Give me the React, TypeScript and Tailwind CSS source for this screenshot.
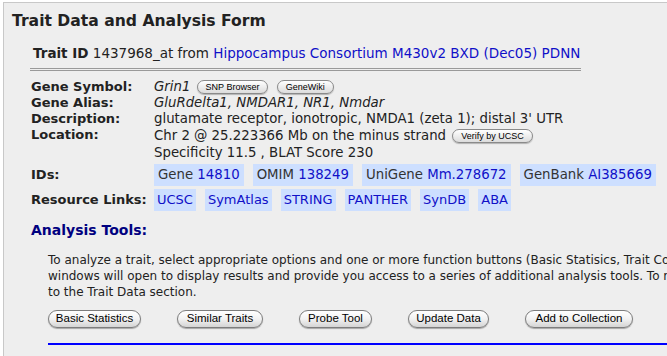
import type { ReactNode } from "react";

const font = { fontFamily: '"DejaVu Sans", Verdana, sans-serif' };

// Row in the gene info table
function InfoRow({ label, children, className = "" }: { label: string; children: ReactNode; className?: string }) {
  return (
    <div className={`flex ${className}`}>
      <div className="w-[123px] shrink-0 font-bold text-[13px] text-[#222]">{label}</div>
      <div className="text-[13.3px] text-[#222]">{children}</div>
    </div>
  );
}

function MiniButton({ children }: { children: ReactNode }) {
  return (
    <span
      className="inline-flex items-center h-[14px] px-[8px] mx-[2px] align-middle rounded-full border border-[#8a8a8a] bg-gradient-to-b from-white to-[#dcdcdc] text-[9px] text-black shadow-[0_1px_1px_rgba(0,0,0,0.25)]"
      style={{ fontFamily: '"Liberation Sans", Arial, sans-serif' }}
    >
      {children}
    </span>
  );
}

function ActionButton({ children, className }: { children: ReactNode; className: string }) {
  return (
    <button
      className={`h-[18px] rounded-full border border-[#7d7d7d] bg-gradient-to-b from-white via-[#f2f2f2] to-[#d4d4d4] text-[11.5px] leading-none text-black shadow-[0_1px_1px_rgba(0,0,0,0.3)] ${className}`}
      style={{ fontFamily: '"Liberation Sans", Arial, sans-serif' }}
    >
      {children}
    </button>
  );
}

function Chip({ label, value, className = "px-[4px] text-[13.3px]" }: { label?: string; value: string; className?: string }) {
  return (
    <span className={`bg-[#cddfff] py-[3px] ${className}`}>
      {label && <span className="text-[#333]">{label} </span>}
      <span className="text-[#1010c8]">{value}</span>
    </span>
  );
}

const resourceLinks = ["UCSC", "SymAtlas", "STRING", "PANTHER", "SynDB", "ABA"];

export default function App() {
  return (
    <div className="w-[667px] h-[356px] overflow-hidden bg-white" style={font}>
      <div className="ml-[3px] mt-[2px] h-[400px] w-[800px] border-l border-t border-[#c8c8c8] bg-[#eeeeee] pl-[8px]">
        {/* Title */}
        <h1 className="pt-[8px] text-[15.6px] font-bold text-[#222] leading-[20px]">Trait Data and Analysis Form</h1>

        {/* Trait ID header */}
        <div className="mt-[14px] ml-[18px] inline-block border-b-[3px] border-double border-[#999] pl-[3px] pr-[1px] pb-[6px] text-[13.5px] leading-[17px]">
          <span className="font-bold text-[#222]">Trait ID</span>{" "}
          <span className="text-[#222]">1437968_at from </span>
          <span className="text-[#1010c8]">Hippocampus Consortium M430v2 BXD (Dec05) PDNN</span>
        </div>

        {/* Gene info */}
        <div className="mt-[8px] ml-[19px] leading-[16px]">
          <InfoRow label="Gene Symbol:">
            <i>Grin1</i> <MiniButton>SNP Browser</MiniButton> <MiniButton>GeneWiki</MiniButton>
          </InfoRow>
          <InfoRow label="Gene Alias:">
            <i>GluRdelta1, NMDAR1, NR1, Nmdar</i>
          </InfoRow>
          <InfoRow label="Description:">glutamate receptor, ionotropic, NMDA1 (zeta 1); distal 3' UTR</InfoRow>
          <InfoRow label="Location:">
            <div className="h-[18px] flex items-center">
              Chr 2 @ 25.223366 Mb on the minus strand&nbsp;<MiniButton>Verify by UCSC</MiniButton>
            </div>
            <div>Specificity 11.5 , BLAT Score 230</div>
          </InfoRow>

          <div className="flex items-center mt-[3px]">
            <div className="w-[123px] shrink-0 font-bold text-[13px] text-[#222]">IDs:</div>
            <div className="flex gap-[9px] leading-[16px]">
              <Chip label="Gene" value="14810" />
              <Chip label="OMIM" value="138249" />
              <Chip label="UniGene" value="Mm.278672" />
              <Chip label="GenBank" value="AI385669" />
            </div>
          </div>
          <div className="flex items-center mt-[3px]">
            <div className="w-[123px] shrink-0 font-bold text-[13px] text-[#222]">Resource Links:</div>
            <div className="flex gap-[9px] leading-[16px]">
              {resourceLinks.map((link) => (
                <Chip key={link} value={link} className="px-[3px] text-[13px]" />
              ))}
            </div>
          </div>
        </div>

        {/* Analysis tools */}
        <div className="ml-[19px] mt-[9px]">
          <h2 className="text-[14px] font-bold text-[#000080] leading-[20px]">Analysis Tools:</h2>
          <p className="mt-[12px] ml-[17px] whitespace-nowrap text-[12px] leading-[16px] text-[#222]">
            To analyze a trait, select appropriate options and one or more function buttons (Basic Statisics, Trait Correlations, Interval Mapping). New
            <br />
            windows will open to display results and provide you access to a series of additional analysis tools. To revise the data, scroll down
            <br />
            to the Trait Data section.
          </p>
          <div className="ml-[17px] mt-[10px] flex gap-[36px]">
            <ActionButton className="w-[93px]">Basic Statistics</ActionButton>
            <ActionButton className="w-[86px]">Similar Traits</ActionButton>
            <ActionButton className="w-[73px]">Probe Tool</ActionButton>
            <ActionButton className="w-[81px]">Update Data</ActionButton>
            <ActionButton className="w-[108px]">Add to Collection</ActionButton>
          </div>
          <div className="ml-[17px] mt-[15px] h-[2px] bg-[#0000ff]" />
        </div>
      </div>
    </div>
  );
}
